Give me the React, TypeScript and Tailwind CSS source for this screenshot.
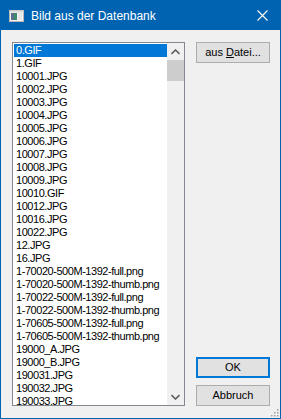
import React from 'react';

const files = [
  '0.GIF', '1.GIF', '10001.JPG', '10002.JPG', '10003.JPG', '10004.JPG', '10005.JPG',
  '10006.JPG', '10007.JPG', '10008.JPG', '10009.JPG', '10010.GIF', '10012.JPG',
  '10016.JPG', '10022.JPG', '12.JPG', '16.JPG', '1-70020-500M-1392-full.png',
  '1-70020-500M-1392-thumb.png', '1-70022-500M-1392-full.png', '1-70022-500M-1392-thumb.png',
  '1-70605-500M-1392-full.png', '1-70605-500M-1392-thumb.png', '19000_A.JPG', '19000_B.JPG',
  '190031.JPG', '190032.JPG', '190033.JPG',
];

export default function App() {
  return (
    <div
      className="w-[281px] h-[419px] border border-[#0063b1] bg-[#f0f0f0] flex flex-col overflow-hidden relative"
      style={{ fontFamily: '"Liberation Sans", Arial, sans-serif' }}
    >
      {/* Title bar */}
      <div className="h-[29px] bg-[#0063b1] flex items-center flex-shrink-0">
        <svg className="ml-[8px] w-[15px] h-[12px]" viewBox="0 0 15 12">
          <rect x="0.5" y="0.5" width="14" height="11" fill="#f4f4f4" stroke="#b8b8b8" />
          <rect x="2" y="3" width="6" height="7" fill="#3e8a6a" />
          <rect x="2" y="3" width="3" height="7" fill="#5a6f8a" />
          <rect x="9" y="3" width="4" height="7" fill="#e8e8e8" />
          <rect x="0.5" y="0.5" width="14" height="2" fill="#dcdcdc" />
        </svg>
        <span className="ml-[7px] text-white text-[12px] leading-none">Bild aus der Datenbank</span>
        <svg className="ml-auto mr-[12px] w-[11px] h-[11px]" viewBox="0 0 11 11">
          <path d="M0.5 0.5L10.5 10.5M10.5 0.5L0.5 10.5" stroke="#ffffff" strokeWidth="1.1" />
        </svg>
      </div>

      {/* Body */}
      <div className="flex-1 flex pl-[11px] pr-[10px] pt-[12px] pb-[13px] gap-[11px]">
        {/* Listbox */}
        <div className="w-[173px] h-[364px] border border-[#828790] bg-white flex overflow-hidden">
          <div className="flex-1 pt-[1px] pl-[1px] overflow-hidden">
            {files.map((f, i) => (
              <div
                key={f}
                className={`h-[13px] pl-[2px] text-[11px] leading-[13px] tracking-[-0.45px] whitespace-nowrap ${
                  i === 0 ? 'bg-[#0078d7] text-white' : 'text-black'
                }`}
              >
                {f}
              </div>
            ))}
          </div>
          {/* Scrollbar */}
          <div className="w-[17px] bg-[#f0f0f0] flex flex-col">
            <div className="h-[17px] flex items-center justify-center">
              <svg width="9" height="6" viewBox="0 0 9 6">
                <path d="M0.5 5L4.5 1L8.5 5" fill="none" stroke="#606060" strokeWidth="1.6" />
              </svg>
            </div>
            <div className="h-[21px] bg-[#cdcdcd]" />
            <div className="flex-1" />
            <div className="h-[17px] flex items-center justify-center">
              <svg width="9" height="6" viewBox="0 0 9 6">
                <path d="M0.5 1L4.5 5L8.5 1" fill="none" stroke="#606060" strokeWidth="1.6" />
              </svg>
            </div>
          </div>
        </div>

        {/* Buttons */}
        <div className="w-[74px] flex flex-col">
          <button className="h-[21px] border border-[#adadad] bg-[#e1e1e1] text-[11px] text-black leading-none">
            aus <span className="underline">D</span>atei...
          </button>
          <div className="flex-1" />
          <button className="h-[21px] border-2 border-[#0078d7] bg-[#e1e1e1] text-[11px] text-black leading-none">
            OK
          </button>
          <button className="mt-[7px] h-[21px] border border-[#adadad] bg-[#e1e1e1] text-[11px] text-black leading-none">
            Abbruch
          </button>
        </div>
      </div>

      {/* Resize grip */}
      <svg className="absolute right-[1px] bottom-[1px]" width="10" height="10" viewBox="0 0 10 10">
        {[
          [8, 2], [8, 5], [5, 5], [8, 8], [5, 8], [2, 8],
        ].map(([x, y]) => (
          <rect key={`${x}-${y}`} x={x} y={y} width="1.5" height="1.5" fill="#a0a0a0" />
        ))}
      </svg>
    </div>
  );
}
